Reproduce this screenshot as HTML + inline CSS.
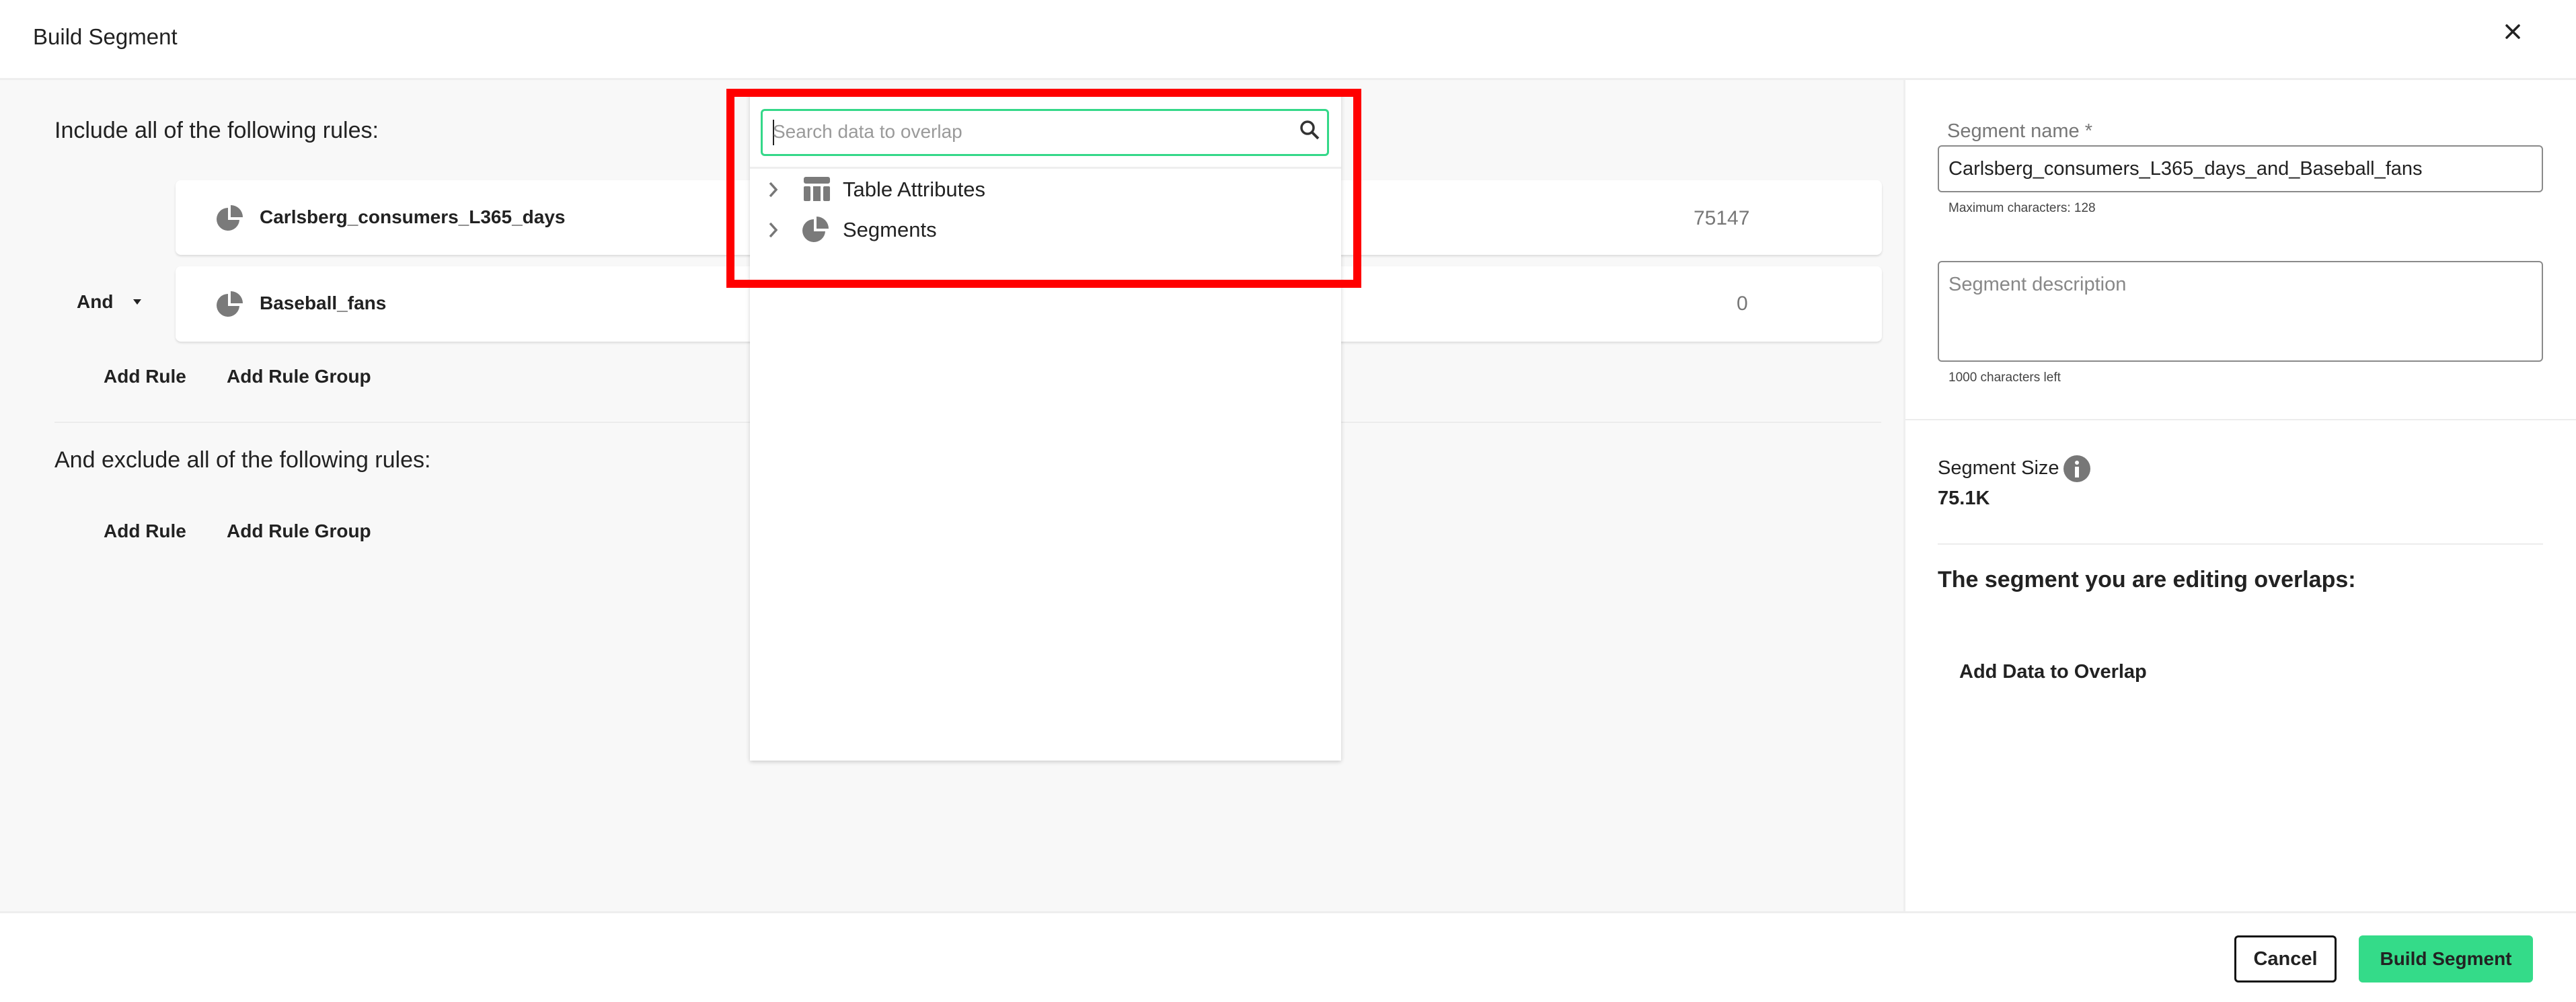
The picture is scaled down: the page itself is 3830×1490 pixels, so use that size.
<!DOCTYPE html>
<html><head><meta charset="utf-8"><style>
*{box-sizing:border-box;margin:0;padding:0}
body{width:3830px;height:1490px;position:relative;overflow:hidden;background:#fff;font-family:"Liberation Sans",sans-serif;color:#222}
.a{position:absolute}
.t{position:absolute;white-space:nowrap;line-height:1}
.card{position:absolute;left:261px;width:2537px;background:#fff;border-radius:8px;box-shadow:0 2px 3px rgba(0,0,0,.12)}
.b{font-weight:bold}
</style></head><body>
<div class="t" style="left:49px;top:38px;font-size:33px;color:#222">Build Segment</div>
<svg class="a" style="left:3724px;top:35px" width="24" height="24" viewBox="0 0 24 24"><path d="M3 3L21 21M21 3L3 21" stroke="#222" stroke-width="3.5" stroke-linecap="round"/></svg>
<div class="a" style="left:0;top:116px;width:3830px;height:3px;background:#eeeeee"></div>
<div class="a" style="left:0;top:119px;width:2831px;height:1237px;background:#f8f8f8"></div>
<div class="a" style="left:2830px;top:119px;width:3px;height:1237px;background:#efefef"></div>
<div class="a" style="left:0;top:1355px;width:3830px;height:3px;background:#eeeeee"></div>

<div class="t" style="left:81px;top:177px;font-size:34px">Include all of the following rules:</div>
<div class="card" style="top:268px;height:111px"></div>
<div class="card" style="top:396px;height:112px"></div>
<svg class="a" style="left:322px;top:304px" width="40" height="40" viewBox="0 0 40 40"><path d="M17 23V5A17 17 0 1 0 34 23Z" fill="#7a7a7a"/><path d="M21 1A18 18 0 0 1 39 19H21Z" fill="#7a7a7a"/></svg>
<div class="t b" style="left:386px;top:309px;font-size:28px">Carlsberg_consumers_L365_days</div>
<div class="t" style="left:2518px;top:310px;font-size:30px;color:#777">75147</div>
<svg class="a" style="left:322px;top:432px" width="40" height="40" viewBox="0 0 40 40"><path d="M17 23V5A17 17 0 1 0 34 23Z" fill="#7a7a7a"/><path d="M21 1A18 18 0 0 1 39 19H21Z" fill="#7a7a7a"/></svg>
<div class="t b" style="left:386px;top:437px;font-size:28px">Baseball_fans</div>
<div class="t" style="left:2582px;top:437px;font-size:30px;color:#777">0</div>
<div class="t b" style="left:114px;top:435px;font-size:28px">And</div>
<svg class="a" style="left:197px;top:443px" width="14" height="12" viewBox="0 0 14 12"><path d="M1 2H13L7 10Z" fill="#222"/></svg>
<div class="t b" style="left:154px;top:546px;font-size:28px">Add Rule</div>
<div class="t b" style="left:337px;top:546px;font-size:28px">Add Rule Group</div>
<div class="a" style="left:81px;top:627px;width:2716px;height:2px;background:#ececec"></div>
<div class="t" style="left:81px;top:667px;font-size:34px">And exclude all of the following rules:</div>
<div class="t b" style="left:154px;top:776px;font-size:28px">Add Rule</div>
<div class="t b" style="left:337px;top:776px;font-size:28px">Add Rule Group</div>

<div class="a" style="left:1115px;top:134px;width:879px;height:997px;background:#fff;box-shadow:0 2px 6px rgba(0,0,0,.18)"></div>
<div class="a" style="left:1131px;top:162px;width:845px;height:70px;border:3px solid #34d889;border-radius:6px;background:#fff"></div>
<div class="a" style="left:1149px;top:178px;width:2px;height:38px;background:#222"></div>
<div class="t" style="left:1149px;top:182px;font-size:28px;color:#9a9a9a">Search data to overlap</div>
<svg class="a" style="left:1932px;top:178px" width="32" height="32" viewBox="0 0 32 32"><circle cx="12" cy="12" r="9" fill="none" stroke="#333" stroke-width="3.5"/><path d="M18.5 18.5L28 28" stroke="#333" stroke-width="4"/></svg>
<div class="a" style="left:1115px;top:248px;width:879px;height:3px;background:#eeeeee"></div>
<svg class="a" style="left:1141px;top:268px" width="18" height="28" viewBox="0 0 18 28"><path d="M4 4L13 14L4 24" fill="none" stroke="#777" stroke-width="3.5"/></svg>
<svg class="a" style="left:1195px;top:263px" width="39" height="36" viewBox="0 0 39 36"><rect x="0" y="0" width="39" height="10" rx="3" fill="#7a7a7a"/><rect x="0" y="14" width="10" height="22" rx="2" fill="#7a7a7a"/><rect x="14" y="14" width="11" height="22" fill="#7a7a7a"/><rect x="29" y="14" width="10" height="22" rx="2" fill="#7a7a7a"/></svg>
<div class="t" style="left:1253px;top:266px;font-size:31px">Table Attributes</div>
<svg class="a" style="left:1141px;top:328px" width="18" height="28" viewBox="0 0 18 28"><path d="M4 4L13 14L4 24" fill="none" stroke="#777" stroke-width="3.5"/></svg>
<svg class="a" style="left:1193px;top:321px" width="40" height="40" viewBox="0 0 40 40"><path d="M17 23V5A17 17 0 1 0 34 23Z" fill="#7a7a7a"/><path d="M21 1A18 18 0 0 1 39 19H21Z" fill="#7a7a7a"/></svg>
<div class="t" style="left:1253px;top:326px;font-size:31px">Segments</div>
<div class="a" style="left:1080px;top:132px;width:944px;height:296px;border:12px solid #ff0000"></div>

<div class="t" style="left:2895px;top:181px;font-size:29px;color:#777">Segment name *</div>
<div class="a" style="left:2881px;top:216px;width:900px;height:70px;border:2px solid #8a8a8a;border-radius:6px"></div>
<div class="t" style="left:2897px;top:237px;font-size:29px;color:#222">Carlsberg_consumers_L365_days_and_Baseball_fans</div>
<div class="t" style="left:2897px;top:300px;font-size:19px;color:#444">Maximum characters: 128</div>
<div class="a" style="left:2881px;top:388px;width:900px;height:150px;border:2px solid #8a8a8a;border-radius:6px"></div>
<div class="t" style="left:2897px;top:409px;font-size:29px;color:#888">Segment description</div>
<div class="t" style="left:2897px;top:552px;font-size:19px;color:#444">1000 characters left</div>
<div class="a" style="left:2833px;top:623px;width:997px;height:2px;background:#ececec"></div>
<div class="t" style="left:2881px;top:682px;font-size:29px">Segment Size</div>
<div class="a" style="left:3068px;top:677px;width:40px;height:40px;border-radius:50%;background:#777"></div>
<div class="a" style="left:3085px;top:685px;width:6px;height:6px;border-radius:50%;background:#fff"></div>
<div class="a" style="left:3085px;top:694px;width:6px;height:16px;background:#fff"></div>
<div class="t b" style="left:2881px;top:727px;font-size:29px">75.1K</div>
<div class="a" style="left:2881px;top:808px;width:900px;height:2px;background:#ececec"></div>
<div class="t b" style="left:2881px;top:845px;font-size:34px">The segment you are editing overlaps:</div>
<div class="t b" style="left:2913px;top:985px;font-size:29px">Add Data to Overlap</div>

<div class="a" style="left:3322px;top:1391px;width:152px;height:70px;border:3px solid #111;border-radius:6px"></div>
<div class="t b" style="left:3322px;top:1412px;width:152px;text-align:center;font-size:29px">Cancel</div>
<div class="a" style="left:3507px;top:1391px;width:259px;height:70px;background:#34db89;border-radius:6px"></div>
<div class="t b" style="left:3507px;top:1412px;width:259px;text-align:center;font-size:28px">Build Segment</div>
</body></html>
